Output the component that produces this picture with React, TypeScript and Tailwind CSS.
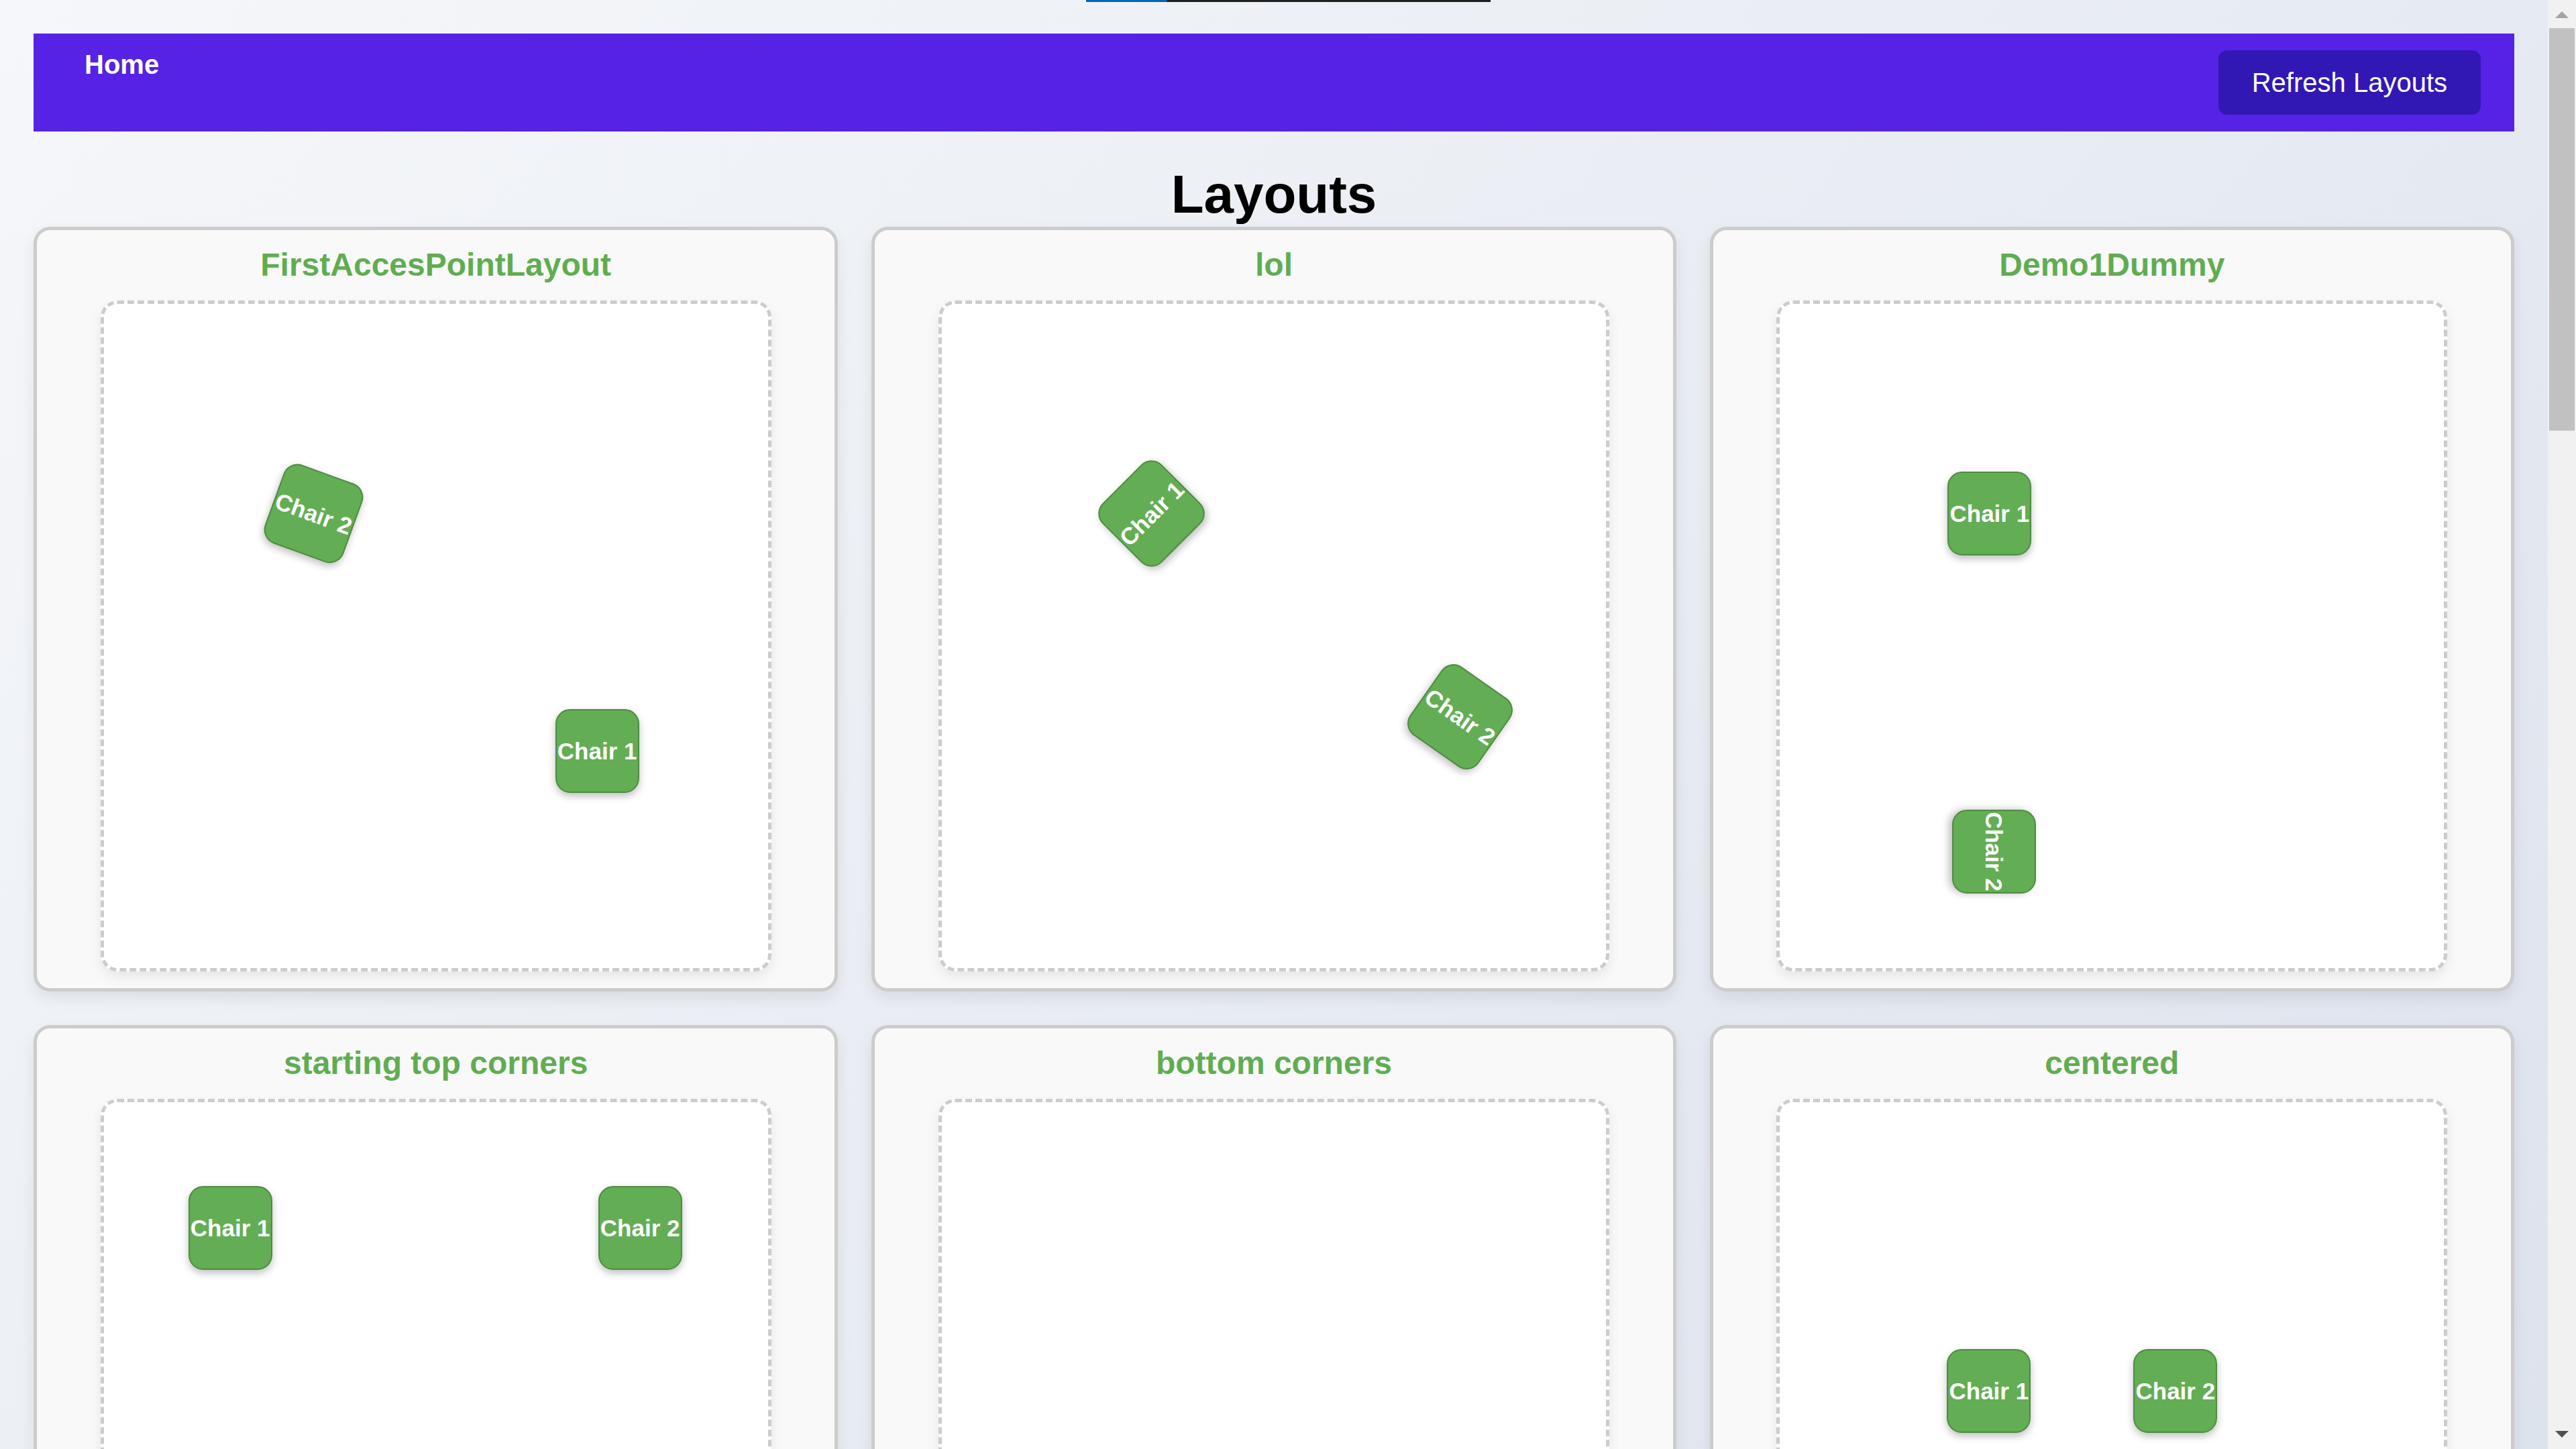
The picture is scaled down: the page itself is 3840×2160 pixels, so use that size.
import React from "react";

type Chair = { name: string; x: number; y: number; r: number };
type Layout = { title: string; chairs: Chair[] };

const layouts: Layout[] = [
  {
    title: "FirstAccesPointLayout",
    chairs: [
      { name: "Chair 1", x: 673, y: 604, r: 0 },
      { name: "Chair 2", x: 250, y: 250, r: 20 },
    ],
  },
  {
    title: "lol",
    chairs: [
      { name: "Chair 1", x: 250, y: 250, r: -45 },
      { name: "Chair 2", x: 710, y: 553, r: 35 },
    ],
  },
  {
    title: "Demo1Dummy",
    chairs: [
      { name: "Chair 1", x: 250, y: 250, r: 0 },
      { name: "Chair 2", x: 257, y: 754, r: 90 },
    ],
  },
  {
    title: "starting top corners",
    chairs: [
      { name: "Chair 1", x: 126, y: 125, r: 0 },
      { name: "Chair 2", x: 737, y: 125, r: 0 },
    ],
  },
  {
    title: "bottom corners",
    chairs: [],
  },
  {
    title: "centered",
    chairs: [
      { name: "Chair 1", x: 249, y: 368, r: 0 },
      { name: "Chair 2", x: 527, y: 368, r: 0 },
    ],
  },
];

function ChairBox({ chair }: { chair: Chair }) {
  return (
    <div
      className="absolute flex h-[125px] w-[125px] items-center justify-center whitespace-nowrap rounded-[22px] border-2 border-[#4d8c41] bg-[#63ad54] text-[35px] font-bold leading-[40px] text-white shadow-[0_5px_12px_rgba(0,0,0,0.25)]"
      style={{ left: chair.x, top: chair.y, transform: `rotate(${chair.r}deg)` }}
    >
      {chair.name}
    </div>
  );
}

function LayoutCard({ layout }: { layout: Layout }) {
  return (
    <div className="flex flex-col items-center rounded-[25px] border-[5px] border-[#cccccc] bg-[#f9f9f9] p-[25px] shadow-[0_10px_22px_rgba(0,0,0,0.08)]">
      <h3 className="mb-[26px] text-[48px] font-bold leading-[54px] text-[#60ad51]">{layout.title}</h3>
      <div className="relative h-[1000px] w-[1000px] rounded-[25px] border-[5px] border-dashed border-[#cccccc] bg-white shadow-[0_8px_18px_rgba(0,0,0,0.08)]">
        {layout.chairs.map((c) => (
          <ChairBox key={c.name} chair={c} />
        ))}
      </div>
    </div>
  );
}

export default function App() {
  return (
    <div className="flex h-[2160px] w-full overflow-hidden font-['Liberation_Sans',Arial,sans-serif]">
      <div className="relative flex-1 overflow-hidden bg-[linear-gradient(135deg,#f5f7fa_0%,#dde3ed_100%)] p-[50px]">
        <div className="absolute left-[1619px] top-0 flex h-[3px] w-[603px]">
          <div className="w-[120px] bg-[#0067b8]" />
          <div className="flex-1 bg-[#1f1f1f]" />
        </div>
        <nav className="flex items-start justify-between bg-[#5622e6] px-[50px] py-[25px]">
          <a className="ml-[26px] -mt-[2px] text-[40px] font-bold leading-[46px] text-white">Home</a>
          <button className="rounded-[13px] bg-[#3118b5] px-[50px] py-[25px] text-[40px] leading-[46px] text-white">
            Refresh Layouts
          </button>
        </nav>
        <h1 className="mt-[48px] mb-[2px] text-center text-[80px] font-bold leading-[92px] text-black">Layouts</h1>
        <div className="grid grid-cols-3 gap-[50px]">
          {layouts.map((l) => (
            <LayoutCard key={l.title} layout={l} />
          ))}
        </div>
      </div>
      <div className="flex w-[42px] flex-col bg-[#f1f1f1]">
        <div className="flex h-[42px] items-start justify-center pt-[17px]">
          <svg width="20" height="10" viewBox="0 0 20 10">
            <polygon points="0,10 20,10 10,0" fill="#a3a3a3" />
          </svg>
        </div>
        <div className="mx-[2px] h-[600px] bg-[#c1c1c1]" />
        <div className="flex-1" />
        <div className="flex h-[42px] items-start justify-center pt-[15px]">
          <svg width="20" height="10" viewBox="0 0 20 10">
            <polygon points="0,0 20,0 10,10" fill="#505050" />
          </svg>
        </div>
      </div>
    </div>
  );
}
